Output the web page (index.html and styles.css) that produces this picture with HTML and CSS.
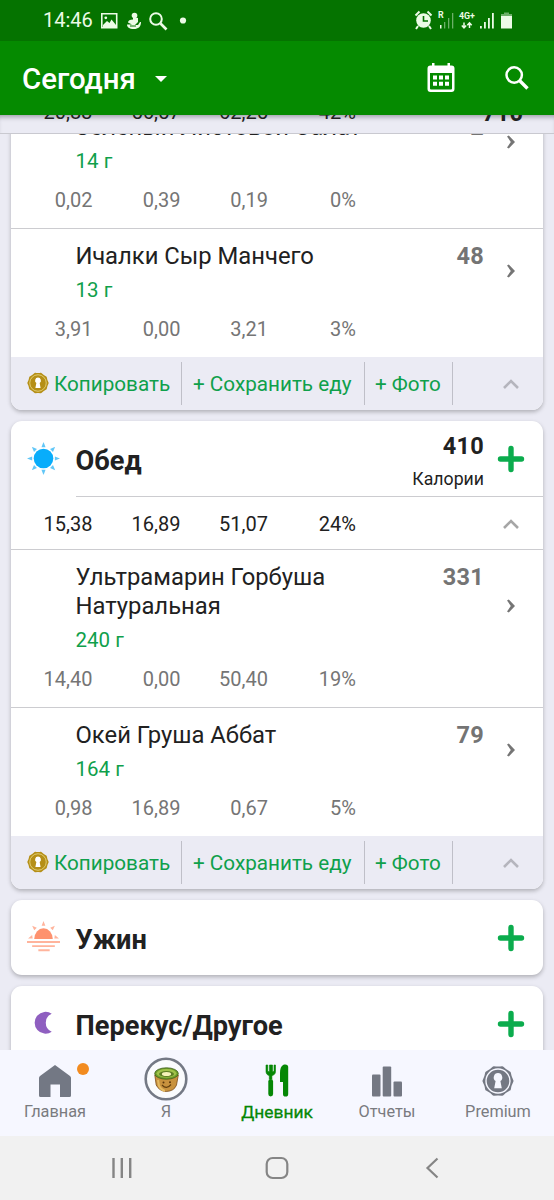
FILE: index.html
```html
<!DOCTYPE html>
<html lang="ru">
<head>
<meta charset="utf-8">
<title>Дневник</title>
<link rel="stylesheet" href="styles.css">
</head>
<body>
<svg class="defs" width="0" height="0">
  <symbol id="up" viewBox="0 0 18 12"><path d="M2 10l7-7 7 7" fill="none" stroke="currentColor" stroke-width="2.6"/></symbol>
  <symbol id="right" viewBox="0 0 8 14"><path d="M0 1.500L1.800.5 8 7l-6.200 6.500L0 12.500 3.800 7z" fill="currentColor"/></symbol>
  <symbol id="plus" viewBox="0 0 28 28"><path d="M14 3.500v21M3.500 14h21" stroke="#0bac4d" stroke-width="5.400" stroke-linecap="round"/></symbol>
  <symbol id="badge" viewBox="0 0 32 32"><path d="M30 16Q27.900 19.900 27.300 24.200 23.300 26.100 20.300 29.300 16 28.500 11.700 29.300 8.700 26.100 4.700 24.200 4.100 19.900 2 16 4.100 12.100 4.700 7.800 8.700 5.900 11.700 2.700 16 3.500 20.300 2.700 23.300 5.900 27.300 7.800 27.900 12.100 30 16z" fill="currentColor" stroke="currentColor" stroke-width="3" stroke-linejoin="round"/><circle cx="16" cy="16" r="12" fill="none" stroke="var(--ring)" stroke-width="1.400"/><path d="M16 8a4.400 4.400 0 0 1 2.400 8l1.400 7.200h-7.600l1.400-7.200A4.400 4.400 0 0 1 16 8z" fill="var(--hole)"/></symbol>
</svg>
<div class="screen">
  <div class="status">
    <span class="clock">14:46</span>
    <svg class="status-left" width="90" height="20" viewBox="0 0 90 20" fill="#ecfbe6">
      <path fill-rule="evenodd" d="M1 2h16.500v15.500H1zM2.600 3.600v12.300h13.300V3.600z"/><path d="M3 14l4-4 2.500 2 2-3.500L16 14v3H3z"/><circle cx="5.800" cy="6.800" r="1.400"/>
      <circle cx="34.500" cy="4.500" r="2.800"/><path d="M33 6l5 1v4l-3 3h3l2-3h1c0 5-3 7-7 7-5 0-7-2-7-4.500h5l-4-2c0-2 2-3 5-3z"/><path d="M30 15h6" stroke="#057300" stroke-width="1"/>
      <circle cx="56" cy="8" r="5.800" fill="none" stroke="#ecfbe6" stroke-width="2"/><path d="M60.500 12.500l6 6" stroke="#ecfbe6" stroke-width="2.600"/>
      <circle cx="83" cy="9.500" r="3.100"/>
    </svg>
    <svg class="status-right" width="100" height="22" viewBox="0 0 100 22" fill="#ecfbe6">
      <circle cx="9.500" cy="10.500" r="7.300"/><path d="M9.500 6v5h4.500" fill="none" stroke="#057300" stroke-width="1.600"/><path d="M1.500 5.500l4-4M17.500 5.500l-4-4M4 16l-2 3M15 16l2 3" stroke="#ecfbe6" stroke-width="2"/>
      <text x="24" y="8" class="tiny">R</text><path d="M26 15h1.500v3.500H26z"/><path d="M30 12h1.300v6.500H30zM34 8h1.300v10.500H34zM38 3h1.300v15.500H38z" opacity=".45"/>
      <text x="45" y="9" class="tiny">4G+</text><path d="M50 12.500v5M47.800 15.500l2.200 2.300 2.200-2.300M55.500 18v-5M53.300 15.200l2.200-2.300 2.200 2.300" fill="none" stroke="#ecfbe6" stroke-width="1.500"/>
      <path d="M66 16h1.800v2.500H66zM70 12h1.800v6.500H70zM74 8h1.800v10.500H74zM78 3h1.800v15.500H78z"/>
      <path d="M87 6h11v12.500H87z"/><path d="M90 2.500h5V4h3v2H87V4h3z" opacity=".45"/>
    </svg>
  </div>

  <div class="appbar">
    <span class="day">Сегодня</span>
    <span class="caret"></span>
    <svg class="calendar" width="28" height="30" viewBox="0 0 28 30"><path fill="#fff" fill-rule="evenodd" d="M5 0h2.500v2.500h13V0H23v2.500h1.500a3 3 0 0 1 3 3V26a3 3 0 0 1-3 3h-21a3 3 0 0 1-3-3V5.500a3 3 0 0 1 3-3H5zM3 10v15.500q0 1 1 1h20q1 0 1-1V10z"/><path fill="#fff" d="M6 12.500h4v4H6zM12 12.500h4v4h-4zM18 12.500h4v4h-4zM6 18.700h4v4H6zM12 18.700h4v4h-4zM18 18.700h4v4h-4z"/></svg>
    <svg class="search" width="24" height="24" viewBox="0 0 24 24" fill="none" stroke="#fff"><circle cx="9.200" cy="9" r="7.700" stroke-width="2.500"/><path d="M14.500 14.500l8 8" stroke-width="3.400"/></svg>
  </div>

  <div class="day-total">
    <div class="macros"><span>20,83</span><span>56,57</span><span>62,25</span><span>42%</span></div>
    <b class="day-kcal">710</b>
  </div>

  <div class="feed">
    <section class="card card-cut">
      <div class="item">
        <div class="item-main"><div class="item-text"><div class="title">Зеленый Листовой Салат</div><div class="amount">14 г</div></div><b class="kcal">2</b><svg class="right"><use href="#right"/></svg></div>
        <div class="macros"><span>0,02</span><span>0,39</span><span>0,19</span><span>0%</span></div>
      </div>
      <div class="item">
        <div class="item-main"><div class="item-text"><div class="title">Ичалки Сыр Манчего</div><div class="amount">13 г</div></div><b class="kcal">48</b><svg class="right"><use href="#right"/></svg></div>
        <div class="macros"><span>3,91</span><span>0,00</span><span>3,21</span><span>3%</span></div>
      </div>
      <div class="actions"><span class="copy"><svg class="gold"><use href="#badge"/></svg><span>Копировать</span></span><span class="save">+ Сохранить еду</span><span class="photo">+ Фото</span><svg class="up"><use href="#up"/></svg></div>
    </section>

    <section class="card">
      <div class="meal">
        <svg class="meal-icon" viewBox="0 0 32 32"><g fill="#62c7f7"><path id="ray" d="M16 0l2 5h-4z"/><use href="#ray" transform="rotate(45 16 16)"/><use href="#ray" transform="rotate(90 16 16)"/><use href="#ray" transform="rotate(135 16 16)"/><use href="#ray" transform="rotate(180 16 16)"/><use href="#ray" transform="rotate(225 16 16)"/><use href="#ray" transform="rotate(270 16 16)"/><use href="#ray" transform="rotate(315 16 16)"/></g><circle cx="16" cy="16" r="9.500" fill="#08adfb"/></svg>
        <h2>Обед</h2>
        <div class="meal-kcal"><b>410</b><span>Калории</span></div>
        <svg class="plus"><use href="#plus"/></svg>
      </div>
      <div class="totals"><div class="macros"><span>15,38</span><span>16,89</span><span>51,07</span><span>24%</span></div><svg class="up"><use href="#up"/></svg></div>
      <div class="item">
        <div class="item-main"><div class="item-text"><div class="title">Ультрамарин Горбуша Натуральная</div><div class="amount">240 г</div></div><b class="kcal">331</b><svg class="right"><use href="#right"/></svg></div>
        <div class="macros"><span>14,40</span><span>0,00</span><span>50,40</span><span>19%</span></div>
      </div>
      <div class="item">
        <div class="item-main"><div class="item-text"><div class="title">Окей Груша Аббат</div><div class="amount">164 г</div></div><b class="kcal">79</b><svg class="right"><use href="#right"/></svg></div>
        <div class="macros"><span>0,98</span><span>16,89</span><span>0,67</span><span>5%</span></div>
      </div>
      <div class="actions"><span class="copy"><svg class="gold"><use href="#badge"/></svg><span>Копировать</span></span><span class="save">+ Сохранить еду</span><span class="photo">+ Фото</span><svg class="up"><use href="#up"/></svg></div>
    </section>

    <section class="card">
      <div class="meal">
        <svg class="meal-icon" viewBox="0 0 32 32"><path d="M7 17.500a9 10.500 0 0 1 18 0z" fill="#fe926f"/><g fill="#ffb49c"><path d="M16 0l1.800 4.500h-3.600zM5 4.500l4.500 2L7 9zM27 4.500l-4.500 2L25 9zM1 17l4-3.500.5 3.500zM31 17l-4-3.500-.5 3.500z"/><path d="M0 19.500h32v1.800H0zM5 23.500h22v1.800H5zM11 27.500h11v1.800H11z"/></g></svg>
        <h2>Ужин</h2>
        <svg class="plus"><use href="#plus"/></svg>
      </div>
    </section>

    <section class="card">
      <div class="meal">
        <svg class="meal-icon" viewBox="0 0 32 32"><path d="M24 6.500a9.500 9.500 0 0 0 0 17.500A10.600 10.600 0 1 1 24 6.500z" fill="#8f5fc0"/></svg>
        <h2>Перекус/Другое</h2>
        <svg class="plus"><use href="#plus"/></svg>
      </div>
    </section>
  </div>

  <nav class="tabs">
    <div class="tab"><svg width="34" height="34" viewBox="0 0 34 34"><path d="M17 1l15 11q1 .8 1 2v17.500q0 1.500-1.500 1.500H22V20.500h-9.500V33h-10Q1 33 1 31.500V14q0-1.200 1-2z" fill="#737884"/></svg><span>Главная</span><i class="dot"></i></div>
    <div class="tab"><svg class="avatar" width="44" height="44" viewBox="0 0 44 44"><circle cx="22" cy="22" r="20.300" fill="#fafbfd" stroke="#747985" stroke-width="2.600"/><path d="M10.800 18l1.400 10q3 6 10 6.500 8-.3 10.300-6.500l1.800-10z" fill="#c8923e" stroke="#7b4d1a" stroke-width=".8"/><path d="M14 23l1 6q2 4 6 5" fill="none" stroke="#e4b961" stroke-width="2"/><ellipse cx="22.500" cy="16.500" rx="11.800" ry="5.700" fill="#6f9f2b" stroke="#3f5d1b" stroke-width=".8"/><ellipse cx="22.500" cy="16.300" rx="9.800" ry="4.300" fill="#a1c34b"/><ellipse cx="22.500" cy="17" rx="7.500" ry="3" fill="#5d7d25"/><ellipse cx="22.500" cy="17" rx="4.600" ry="2" fill="#f6f3b9"/><path d="M18 28q4.500 5 9-.5" fill="none" stroke="#64400f" stroke-width="1.200"/><circle cx="19.500" cy="25.500" r="1" fill="#5b370c"/><circle cx="26" cy="25.300" r="1" fill="#5b370c"/></svg><span>Я</span></div>
    <div class="tab active"><svg width="24" height="34" viewBox="0 0 24 34"><path d="M1 1v6.500c0 2.500 1.500 3.500 3.300 4.200V15h2.600v-3.300C9 11 10.500 10 10.500 7.500V1H9v6.500H7.500V1h-3v6.500H2.800V1z" fill="#058705" stroke="#058705" stroke-width=".6"/><path d="M5.700 17.500v12.500" stroke="#058705" stroke-width="4.800" stroke-linecap="round"/><path d="M18.500.8c3-.9 4.700.5 4.700 2.200v27a2.600 2.600 0 0 1-5.200 0V18h-3V9c0-4 1-7 3.500-8.200z" fill="#058705"/></svg><span>Дневник</span></div>
    <div class="tab"><svg width="32" height="34" viewBox="0 0 32 34" fill="#747883"><rect x="1" y="10.500" width="8.500" height="22" rx="1"/><rect x="11.700" y="2.500" width="8.500" height="30" rx="1"/><rect x="22.500" y="17.500" width="8.500" height="15" rx="1"/></svg><span>Отчеты</span></div>
    <div class="tab"><svg class="premium"><use href="#badge"/></svg><span>Premium</span></div>
  </nav>

  <div class="system">
    <svg width="22" height="22" viewBox="0 0 22 22"><path d="M2.500 1v20M10.800 1v20M19.200 1v20" stroke="#858585" stroke-width="2.400"/></svg>
    <svg width="24" height="24" viewBox="0 0 24 24"><rect x="1.700" y="2" width="20.600" height="20" rx="6" fill="none" stroke="#858585" stroke-width="2.200"/></svg>
    <svg width="14" height="22" viewBox="0 0 14 22"><path d="M12.500 1.500L2.500 11l10 9.500" fill="none" stroke="#858585" stroke-width="2.200"/></svg>
  </div>
</div>
</body>
</html>
```
FILE: styles.css
```css
* { box-sizing: border-box; }
body { margin: 0; font-family: Roboto, "Noto Sans", sans-serif; color: #212121; }
svg { display: block; flex: none; }
.defs { position: absolute; }
.screen { width: 554px; height: 1200px; display: flex; flex-direction: column; overflow: hidden; background: #ebebf4; }

.status { flex: none; height: 41px; background: #057300; display: flex; align-items: center; padding: 0 40.500px 0 43px; color: #ecfbe6; }
.clock { font-size: 20px; width: 57px; line-height: 24px; margin-top: -2px; }
.status-right { margin-left: auto; }
.tiny { font: bold 8.800px Roboto, sans-serif; }

.appbar { flex: none; height: 74px; background: #058a00; display: flex; align-items: center; padding: 0 25px 0 22px; color: #fff; }
.day { font-size: 29.400px; font-weight: 500; line-height: 72px; padding-top: 2px; }
.caret { border: 6.500px solid transparent; border-top-color: #fff; border-bottom: 0; margin-left: 19px; margin-top: 2px; }
.calendar { margin-left: auto; }
.search { margin-left: 50px; }

.day-total { flex: none; height: 18.500px; overflow: hidden; display: flex; align-items: flex-start; border-bottom: 1px solid #c9c9d0; box-shadow: inset 0 5px 5px -3px #9c9ca8; }
.day-total .macros { padding-left: 11px; line-height: 24px; margin-top: -15px; }
.day-kcal { flex: none; margin: -15.500px 31px 0 auto; font-size: 23.700px; line-height: 26px; }

.macros { display: grid; grid-template-columns: 81.500px 88px 87.500px 88px; text-align: right; font-size: 20px; }
.feed { flex: 1; min-height: 0; overflow: hidden; padding: 0 11px; display: flex; flex-direction: column; gap: 10.500px; }
.card { flex: none; background: #fff; border-radius: 11px; overflow: hidden; box-shadow: 0 2px 4px rgba(0, 0, 0, .26); }
.card-cut { margin-top: -33.700px; }
.item { border-bottom: 1px solid #ccccd0; }
.item:nth-last-child(2) { border-bottom: 0; }
.item-main { display: flex; padding: 13px 28px 13px 64.500px; align-items: flex-start; }
.item-text { flex: 1; }
.title { font-size: 23.800px; line-height: 28.500px; max-width: 300px; }
.amount { font-size: 20.500px; line-height: 28px; padding-top: 6px; height: 29px; color: #0fa04b; }
.kcal { font-size: 23.500px; line-height: 28.500px; color: #747474; margin-right: 23px; letter-spacing: .3px; }
.right { width: 8px; height: 14px; color: #757575; align-self: center; }
.item .macros { height: 44.500px; line-height: 34px; color: #757575; }

.actions { height: 53.500px; background: #ebebf4; display: flex; align-items: center; font-size: 20.700px; color: #0fa04b; }
.actions > span { height: 43px; display: flex; align-items: center; border-right: 1px solid #bfbfc8; white-space: nowrap; }
.copy { width: 171px; padding-left: 16px; }
.gold { width: 22px; height: 22px; margin: -2px 5px 0 0; color: #b58f17; --ring: #e2cf75; --hole: #fff; }
.save { width: 183px; padding-left: 11px; }
.photo { width: 88px; padding-left: 10px; }
.up { width: 18px; height: 12px; color: #a6a6a6; }
.actions .up { margin-left: 49px; color: #b5b5bd; }

.meal { height: 75.500px; display: flex; align-items: center; padding: 0 18px 0 15.500px; }
.meal-icon { width: 33px; height: 33px; margin-right: 16px; }
h2 { margin: 0; font-size: 27.200px; line-height: 32px; padding-top: 4px; }
.meal-kcal { margin-left: auto; text-align: right; display: flex; flex-direction: column; padding-top: 4px; }
.meal-kcal b { font-size: 23.500px; line-height: 28px; letter-spacing: .3px; }
.meal-kcal span { font-size: 17.700px; line-height: 22px; padding-top: 8px; }
.plus { width: 28px; height: 28px; margin-left: auto; }
.meal-kcal + .plus { margin-left: 13px; }
.totals { height: 54px; display: flex; align-items: center; justify-content: space-between; padding: 2px 23px 0 0; border-bottom: 1px solid #ccccd0; background: linear-gradient(#ccccd0, #ccccd0) 65px 0 / 100% 1px no-repeat; }

.tabs { flex: none; height: 85.500px; background: #f6f7ff; display: grid; grid-template-columns: 110px 112px 110px 110px 112px; }
.tab { position: relative; display: flex; flex-direction: column; align-items: center; padding-top: 14.500px; color: #7a7b80; font-size: 16.300px; line-height: 20px; }
.tab span { margin-top: 3.500px; }
.tab svg { margin-top: -1px; margin-bottom: 1px; }
.active { color: #058705; }
.active span { font-size: 17.400px; -webkit-text-stroke: .3px #058705; }
.tab .avatar { margin: -8px 0 -2px; }
.premium { width: 32px; height: 34px; color: #747883; --ring: #f6f7ff; --hole: #f6f7ff; }
.dot { position: absolute; left: 77px; top: 12.500px; width: 12px; height: 12px; border-radius: 50%; background: #f28b20; }
.system { flex: none; height: 64.500px; background: #f1f1f1; display: grid; grid-template-columns: 154px 157px 1fr; align-items: center; padding-left: 111px; }
.system svg:last-child { margin-left: 3px; }
```
